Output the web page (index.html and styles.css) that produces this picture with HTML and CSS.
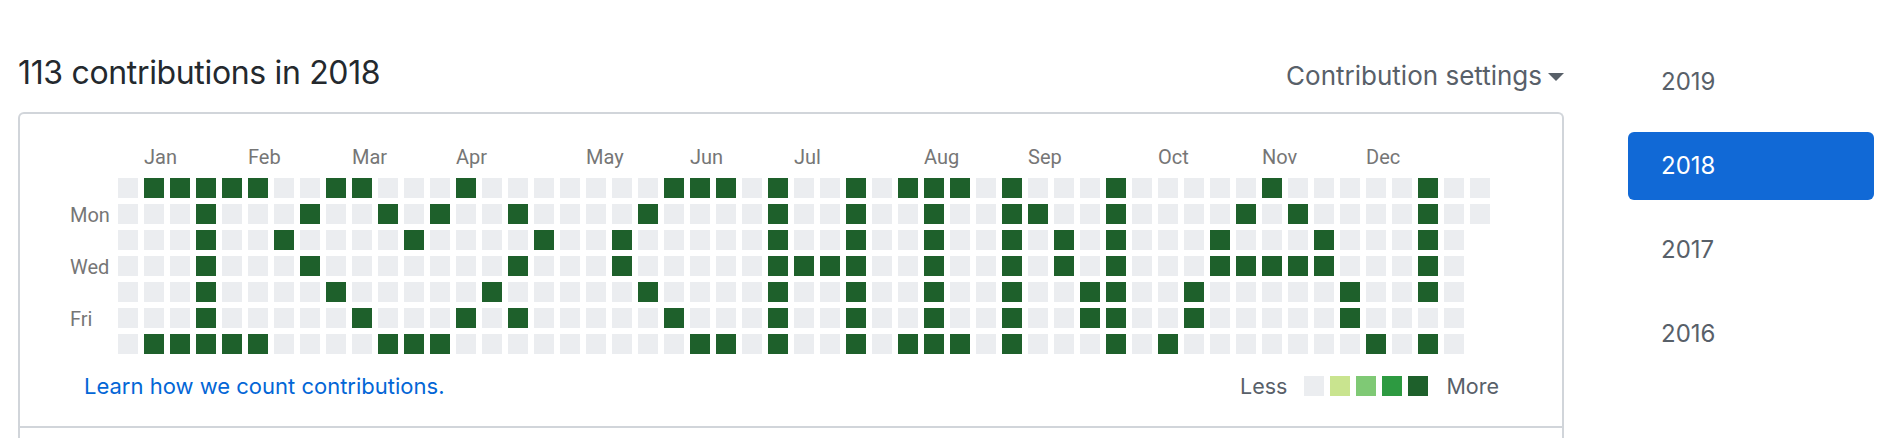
FILE: index.html
```html
<!DOCTYPE html>
<html lang="en">

<head>
    <meta charset="UTF-8">
    <title>Contributions</title>
    <link rel="stylesheet" href="styles.css">
</head>

<body>
    <div class="pagina">
        <div class="contenido">
            <div class="cabecera">
                <h2 class="titulo">113 contributions in 2018</h2>
                <div class="ajustes">Contribution settings <span class="caret"></span></div>
            </div>

            <div class="caja">
                <div class="calendario">
                    <div class="meses" id="meses"></div>
                    <div class="cuerpo">
                        <div class="dias">
                            <span></span>
                            <span>Mon</span>
                            <span></span>
                            <span>Wed</span>
                            <span></span>
                            <span>Fri</span>
                            <span></span>
                        </div>
                        <div class="celdas" id="celdas"></div>
                    </div>
                    <div class="pie">
                        <a class="enlace" href="#">Learn how we count contributions.</a>
                        <div class="leyenda">
                            <span class="leyenda-texto">Less</span>
                            <div class="leyenda-colores">
                                <i class="celda nivel-0"></i>
                                <i class="celda nivel-1"></i>
                                <i class="celda nivel-2"></i>
                                <i class="celda nivel-3"></i>
                                <i class="celda nivel-4"></i>
                            </div>
                            <span class="leyenda-texto">More</span>
                        </div>
                    </div>
                </div>
            </div>
        </div>

        <ul class="anios">
            <li><a href="#">2019</a></li>
            <li><a class="activo" href="#">2018</a></li>
            <li><a href="#">2017</a></li>
            <li><a href="#">2016</a></li>
        </ul>
    </div>

    <script src="script.js"></script>
</body>

</html>
```

FILE: styles.css
```css
html,
body {
    height: 438px;
    margin: 0;
    overflow: hidden;
    background-color: white;
}

body {
    font-family: Inter, "Liberation Sans", sans-serif;
}

.pagina {
    display: flex;
    height: 438px;
    padding-left: 18px;
    box-sizing: border-box;
}

.contenido {
    width: 1546px;
    flex-shrink: 0;
}

.cabecera {
    display: flex;
    justify-content: space-between;
    height: 112px;
    padding-top: 53px;
    box-sizing: border-box;
}

.titulo {
    margin: 0;
    font-size: 32px;
    line-height: 40px;
    font-weight: 400;
    letter-spacing: -0.34px;
    color: #24292e;
}

.ajustes {
    display: flex;
    align-items: center;
    gap: 6px;
    height: 44px;
    font-size: 26px;
    color: #586069;
}

.caret {
    width: 0;
    height: 0;
    margin-top: 4px;
    border-style: solid;
    border-width: 8px 8px 0;
    border-color: #586069 transparent transparent;
}

.caja {
    border: 2px solid #d1d5da;
    border-bottom: none;
    border-radius: 6px 6px 0 0;
    height: 326px;
    box-sizing: border-box;
}

.calendario {
    height: 314px;
    padding: 31px 0 0 50px;
    box-sizing: border-box;
    border-bottom: 2px solid #d1d5da;
}

.meses {
    display: grid;
    grid-template-columns: repeat(53, 26px);
    height: 33px;
    margin-left: 48px;
    font-family: Roboto, sans-serif;
    font-size: 20px;
    line-height: 24px;
    color: #767676;
}

.meses span {
    white-space: nowrap;
}

.cuerpo {
    display: flex;
}

.dias {
    display: grid;
    grid-template-rows: repeat(7, 26px);
    width: 48px;
    font-family: Roboto, sans-serif;
    font-size: 20px;
    line-height: 22px;
    color: #767676;
}

.celdas {
    display: grid;
    grid-template-columns: repeat(53, 20px);
    grid-auto-rows: 20px;
    gap: 6px;
}

.celda {
    display: block;
    width: 20px;
    height: 20px;
}

.nivel-0 {
    background-color: #ebedf0;
}

.nivel-1 {
    background-color: #c9e48f;
}

.nivel-2 {
    background-color: #7fc975;
}

.nivel-3 {
    background-color: #2d9a41;
}

.nivel-4 {
    background-color: #1e602b;
}

.pie {
    display: flex;
    justify-content: space-between;
    align-items: center;
    margin-top: 13px;
    padding-left: 14px;
    padding-right: 63px;
    height: 26px;
}

.enlace {
    font-size: 22px;
    color: #0366d6;
    text-decoration: none;
}

.leyenda {
    display: flex;
    align-items: center;
}

.leyenda-texto {
    font-size: 21.5px;
    color: #586069;
}

.leyenda-colores {
    display: flex;
    gap: 6px;
    margin: 0 18px 0 17px;
}

.anios {
    list-style: none;
    width: 246px;
    margin: 48px 0 0 64px;
    padding: 0;
}

.anios li {
    margin-bottom: 16px;
}

.anios a {
    display: block;
    height: 68px;
    padding-left: 33px;
    border-radius: 6px;
    font-size: 24px;
    line-height: 68px;
    color: #586069;
    text-decoration: none;
}

.anios a.activo {
    background-color: #1169d6;
    color: white;
}
```

FILE: script.js
```js
// Each row is a weekday, the numbers are the weeks with contributions
const filas = [
    [1, 2, 3, 4, 5, 8, 9, 13, 21, 22, 23, 25, 28, 30, 31, 32, 34, 38, 44, 50],
    [3, 7, 10, 12, 15, 20, 25, 28, 31, 34, 35, 38, 43, 45, 50],
    [3, 6, 11, 16, 19, 25, 28, 31, 34, 36, 38, 42, 46, 50],
    [3, 7, 15, 19, 25, 26, 27, 28, 31, 34, 36, 38, 42, 43, 44, 45, 46, 50],
    [3, 8, 14, 20, 25, 28, 31, 34, 37, 38, 41, 47, 50],
    [3, 9, 13, 15, 21, 25, 28, 31, 34, 37, 38, 41, 47],
    [1, 2, 3, 4, 5, 10, 11, 12, 22, 23, 25, 28, 30, 31, 32, 34, 38, 40, 48, 50]
];

const meses = [
    ['Jan', 1], ['Feb', 5], ['Mar', 9], ['Apr', 13], ['May', 18], ['Jun', 22],
    ['Jul', 26], ['Aug', 31], ['Sep', 35], ['Oct', 40], ['Nov', 44], ['Dec', 48]
];

const celdas = document.getElementById('celdas');
filas.forEach((activas, fila) => {
    // only the first two rows reach the last week
    const total = fila < 2 ? 53 : 52;
    for (let i = 0; i < total; i++) {
        const celda = document.createElement('i');
        celda.className = 'celda ' + (activas.includes(i) ? 'nivel-4' : 'nivel-0');
        celda.style.gridRow = fila + 1;
        celda.style.gridColumn = i + 1;
        celdas.appendChild(celda);
    }
});

const contenedor = document.getElementById('meses');
meses.forEach(([nombre, semana]) => {
    const mes = document.createElement('span');
    mes.textContent = nombre;
    mes.style.gridColumnStart = semana + 1;
    contenedor.appendChild(mes);
});
```
